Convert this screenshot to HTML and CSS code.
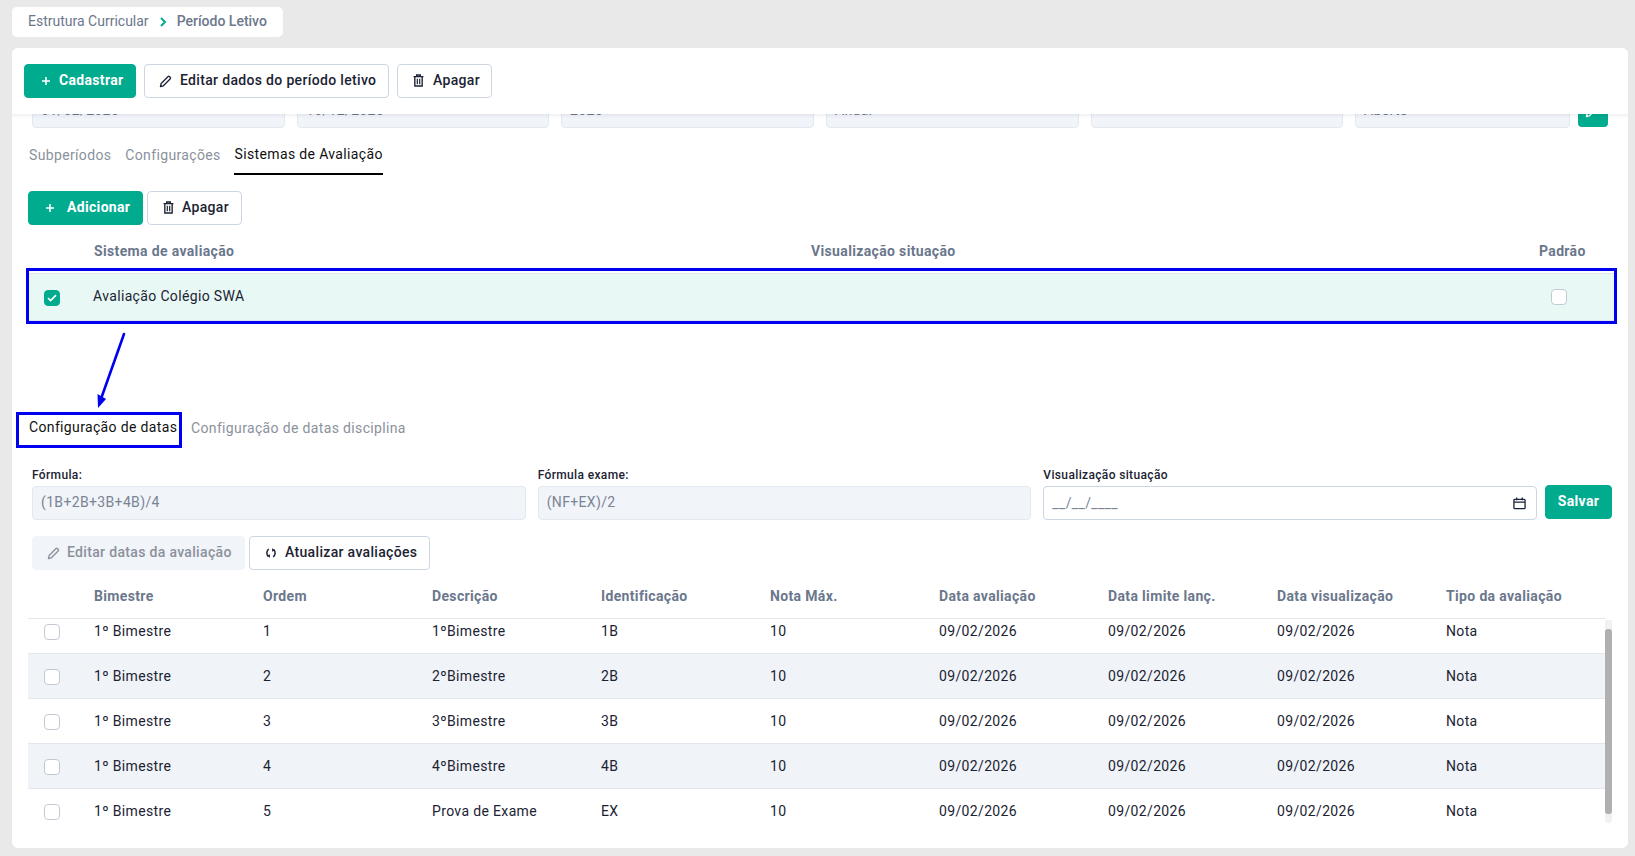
FILE: index.html
```html
<!DOCTYPE html>
<html lang="pt-BR">
<head>
<meta charset="utf-8">
<title>Período Letivo</title>
<link rel="stylesheet" href="styles.css">
</head>
<body>
<svg class="defs" width="0" height="0" aria-hidden="true">
  <symbol id="i-plus" viewBox="0 0 10 10"><path d="M5 1v8M1 5h8" fill="none" stroke="currentColor" stroke-width="1.6"/></symbol>
  <symbol id="i-pencil" viewBox="0 0 14 14"><path d="M1.500 12.500l.8-3.300 7.500-7.500a1 1 0 0 1 1.400 0l1 1a1 1 0 0 1 0 1.400l-7.500 7.500z" fill="none" stroke="currentColor" stroke-width="1.400" stroke-linejoin="round"/><path d="M1.500 12.500l.5-2 1.500 1.500z" fill="currentColor"/></symbol>
  <symbol id="i-trash" viewBox="0 0 12 14"><path d="M.6 2.800h10.800M4 2.800V1h4v1.800M2 2.800v10.200h8V2.800" fill="none" stroke="currentColor" stroke-width="1.500"/><path d="M4.700 5v6M7.300 5v6" stroke="currentColor" stroke-width="1.300"/></symbol>
  <symbol id="i-sync" viewBox="0 0 12 12"><path d="M3.900 2.200C1.500 3.500 1.100 7.500 3.300 9.500M8.100 9.800C10.500 8.500 10.900 4.500 8.700 2.500" fill="none" stroke="currentColor" stroke-width="1.500"/><path d="M1.900 8.800 5 10.800 4.800 7.300zM10.100 3.200 7 1.200 7.200 4.700z" fill="currentColor"/></symbol>
</svg>

<main class="page">
  <nav class="crumbs">
    <span>Estrutura Curricular</span>
    <svg class="crumb-sep" width="7" height="10" viewBox="0 0 7 10"><path d="M1 1l4 4-4 4" fill="none" stroke="currentColor" stroke-width="2"/></svg>
    <span class="crumb-now">Período Letivo</span>
  </nav>

  <section class="card">
    <header class="toolbar">
      <button class="btn btn-primary btn-cad"><svg class="ico-plus"><use href="#i-plus"/></svg>Cadastrar</button>
      <button class="btn btn-edit"><svg class="ico-pencil"><use href="#i-pencil"/></svg>Editar dados do período letivo</button>
      <button class="btn btn-del"><svg class="ico-trash"><use href="#i-trash"/></svg>Apagar</button>
    </header>

    <div class="peek">
      <div class="peek-field w253">01/02/2026</div>
      <div class="peek-field w252">10/12/2026</div>
      <div class="peek-field w253">2026</div>
      <div class="peek-field w253">Anual</div>
      <div class="peek-field w252"></div>
      <div class="peek-field w215">Aberto</div>
      <div class="peek-btn"><svg class="ico-pencil"><use href="#i-pencil"/></svg></div>
    </div>

    <div class="tabs">
      <span class="tab">Subperíodos</span>
      <span class="tab">Configurações</span>
      <span class="tab tab-on">Sistemas de Avaliação</span>
    </div>

    <div class="actions">
      <button class="btn btn-primary btn-add"><svg class="ico-plus"><use href="#i-plus"/></svg>Adicionar</button>
      <button class="btn btn-del2"><svg class="ico-trash"><use href="#i-trash"/></svg>Apagar</button>
    </div>

    <div class="sys-head">
      <span class="sys-name">Sistema de avaliação</span>
      <span class="sys-view">Visualização situação</span>
      <span>Padrão</span>
    </div>
    <div class="sys-row">
      <span class="check check-on"><svg width="10" height="8" viewBox="0 0 10 8"><path d="M1 4l2.600 2.600L9 1.200" fill="none" stroke="#fff" stroke-width="1.700"/></svg></span>
      <span class="sys-label">Avaliação Colégio SWA</span>
      <span class="check check-pad"></span>
    </div>

    <svg class="arrow" width="50" height="88" viewBox="0 0 50 88">
      <path d="M42 10 20 72" fill="none" stroke="#0000f0" stroke-width="2.600" stroke-linecap="round"/>
      <path d="M16 84 15.500 70 24 75z" fill="#0000f0"/>
    </svg>

    <div class="subtabs">
      <span class="subtab-box">Configuração de datas</span>
      <span class="subtab">Configuração de datas disciplina</span>
    </div>

    <div class="form">
      <label class="field"><span class="label">Fórmula:</span><span class="input input-off">(1B+2B+3B+4B)/4</span></label>
      <label class="field"><span class="label">Fórmula exame:</span><span class="input input-off">(NF+EX)/2</span></label>
      <label class="field"><span class="label">Visualização situação</span>
        <span class="input input-date">__/__/____
          <svg width="13" height="14" viewBox="0 0 14 14"><path d="M2 3h10a1 1 0 0 1 1 1v8a1 1 0 0 1-1 1H2a1 1 0 0 1-1-1V4a1 1 0 0 1 1-1zM1 6h12M4 1v3M10 1v3" fill="none" stroke="#17233a" stroke-width="1.400"/></svg>
        </span>
      </label>
      <button class="btn btn-primary btn-save">Salvar</button>
    </div>

    <div class="actions2">
      <button class="btn btn-off"><svg class="ico-pencil"><use href="#i-pencil"/></svg>Editar datas da avaliação</button>
      <button class="btn btn-sync"><svg class="ico-sync"><use href="#i-sync"/></svg>Atualizar avaliações</button>
    </div>

    <div class="grid-head row-cols">
      <span></span><span>Bimestre</span><span>Ordem</span><span>Descrição</span><span>Identificação</span><span>Nota Máx.</span><span>Data avaliação</span><span>Data limite lanç.</span><span>Data visualização</span><span>Tipo da avaliação</span>
    </div>
    <div class="grid-wrap">
      <div class="viewport">
        <div class="rows">
          <div class="row row-cols"><span class="check"></span><span>1º Bimestre</span><span>1</span><span>1ºBimestre</span><span>1B</span><span>10</span><span>09/02/2026</span><span>09/02/2026</span><span>09/02/2026</span><span>Nota</span></div>
          <div class="row row-cols"><span class="check"></span><span>1º Bimestre</span><span>2</span><span>2ºBimestre</span><span>2B</span><span>10</span><span>09/02/2026</span><span>09/02/2026</span><span>09/02/2026</span><span>Nota</span></div>
          <div class="row row-cols"><span class="check"></span><span>1º Bimestre</span><span>3</span><span>3ºBimestre</span><span>3B</span><span>10</span><span>09/02/2026</span><span>09/02/2026</span><span>09/02/2026</span><span>Nota</span></div>
          <div class="row row-cols"><span class="check"></span><span>1º Bimestre</span><span>4</span><span>4ºBimestre</span><span>4B</span><span>10</span><span>09/02/2026</span><span>09/02/2026</span><span>09/02/2026</span><span>Nota</span></div>
          <div class="row row-cols"><span class="check"></span><span>1º Bimestre</span><span>5</span><span>Prova de Exame</span><span>EX</span><span>10</span><span>09/02/2026</span><span>09/02/2026</span><span>09/02/2026</span><span>Nota</span></div>
        </div>
      </div>
      <div class="track"><div class="thumb"></div></div>
    </div>
  </section>
</main>
</body>
</html>
```
FILE: styles.css
```css
* { box-sizing: border-box; }
html, body { margin: 0; height: 100%; }
body {
  background: #e9e9e9;
  color: #1b2333;
  font: 14px/20px Roboto, "Liberation Sans", sans-serif;
  letter-spacing: .35px;
  overflow: hidden;
}
.defs { position: absolute; }
.page { padding: 7px 7px 8px 12px; }

.crumbs {
  display: flex; align-items: center;
  width: 271px; height: 30px;
  padding: 0 16px 2px;
  background: #fff; border-radius: 5px;
  color: #6b778c; letter-spacing: 0;
  white-space: nowrap;
}
.crumb-sep { flex: none; margin: 2px 10px 0 11px; color: #00ab8e; }
.crumb-now { font-weight: 500; }

.card {
  margin-top: 11px;
  height: 800px;
  background: #fff;
  border-radius: 6px;
  overflow: hidden;
}

.toolbar {
  position: relative; z-index: 1;
  display: flex; gap: 8px;
  height: 66px;
  padding: 16px 12px;
  background: #fff;
  box-shadow: 0 1px 4px rgba(30, 40, 60, .1);
}

.btn {
  display: inline-flex; align-items: center;
  height: 34px;
  padding: 0 0 2px;
  border: 1px solid #cdd6e2;
  border-radius: 4px;
  background: #fff;
  color: #1b2333;
  font: 500 14px/20px Roboto, "Liberation Sans", sans-serif;
  letter-spacing: .33px;
}
.btn svg { margin-top: 2px; }
.btn .ico-trash { margin-top: 1px; }
.btn-primary { background: #00ab8e; border-color: #00ab8e; color: #fff; font-weight: 700; }
.btn-cad { width: 112px; padding-left: 16px; }
.btn-cad .ico-plus { margin-right: 8px; }
.btn-edit { width: 245px; padding-left: 14px; }
.btn-edit .ico-pencil { margin-right: 8px; }
.btn-del { width: 95px; padding-left: 15px; }
.btn-del .ico-trash { margin-right: 9px; }
.btn-add { width: 115px; padding-left: 16px; }
.btn-add .ico-plus { margin-right: 12px; }
.btn-del2 { width: 95px; padding-left: 15px; }
.btn-del2 .ico-trash { margin-right: 8px; }
.ico-plus { width: 10px; height: 10px; }
.ico-pencil { width: 13px; height: 13px; }
.ico-trash { width: 11px; height: 13px; }
.ico-sync { width: 12px; height: 12px; margin-right: 8px; }

.peek {
  display: flex; align-items: flex-end; gap: 12px;
  height: 14px;
  padding: 0 20px;
  overflow: hidden;
}
.peek-field {
  flex: none;
  height: 34px;
  padding: 5px 8px;
  background: #f1f4f9;
  border: 1px solid #e3e8f0;
  border-radius: 4px;
  color: #6b778c;
}
.w253 { width: 253px; }
.w252 { width: 252px; }
.w215 { width: 215px; }
.peek-btn {
  flex: none; width: 30px; height: 34px;
  margin: 0 0 1px -4px;
  padding: 10px 0 0 7px;
  background: #00ab8e; border-radius: 4px;
  color: #fff;
}

.tabs {
  display: flex;
  height: 47px;
  padding: 12px 0 0 17px;
}
.tab { margin-right: 14px; color: #8b919c; padding-top: 5px; }
.tab-on {
  height: 35px;
  margin-left: -1px;
  padding: 4px 0 0 1px;
  width: 149px;
  color: #111;
  white-space: nowrap;
  border-bottom: 2.5px solid #000;
}

.actions { display: flex; gap: 4px; margin: 16px 0 0 16px; }

.sys-head {
  display: flex;
  height: 43px;
  padding: 16px 0 0 82px;
  color: #6b778c;
  font-weight: 700;
}
.sys-name { width: 717px; }
.sys-view { width: 728px; }

.sys-row {
  display: flex; align-items: center;
  width: 1591px; height: 56px;
  margin-left: 14px;
  padding: 0 47px 0 15px;
  border: 3px solid #0000f0;
  background: #e8f8f5;
  box-shadow: inset 0 2px 0 #fff, inset 0 3px 0 #e2e8f0, inset 0 -1px 0 #dfe5ec;
}
.sys-label { flex: 1; margin-left: 33px; }

.check {
  display: block; flex: none;
  width: 16px; height: 16px;
  margin-left: 16px;
  border: 1px solid #c3c9d2;
  border-radius: 4px;
  background: #fff;
}
.check-on {
  display: flex; align-items: center; justify-content: center;
  margin-left: 0; margin-top: 3px;
  background: #00ab8e; border-color: #00ab8e;
}
.check-pad { margin: 1px 0 0; }
.row .check { margin-top: 1px; }

.arrow { display: block; margin-left: 70px; }

.subtabs {
  display: flex; align-items: center;
  height: 36px;
  margin-left: 4px;
}
.subtab-box {
  height: 36px;
  width: 166px;
  padding: 2px 0 0 10px;
  border: 3px solid #0000f0;
  color: #111;
  white-space: nowrap;
}
.subtab { margin: -4px 0 0 9px; color: #8b919c; }

.form {
  display: flex; align-items: flex-end; gap: 12px;
  margin: 20px 16px 0 20px;
}
.field { flex: 1; display: block; }
.label {
  display: block;
  margin-bottom: 4px;
  font-size: 12px; line-height: 14px; font-weight: 500;
  letter-spacing: .35px;
  color: #1b2333;
}
.input {
  display: flex; align-items: center;
  height: 34px;
  padding: 0 8px 2px;
  border-radius: 4px;
  color: #7a8494;
}
.input-off { background: #f1f4f9; border: 1px solid #e3e8f0; }
.input-date { justify-content: space-between; padding: 0 10px 0 8px; border: 1px solid #cdd6e2; background: #fff; }
.btn-save { width: 67px; justify-content: center; margin: 0 0 1px -4px; }

.actions2 { display: flex; gap: 4px; margin: 16px 0 0 20px; }
.btn-off { width: 213px; padding-left: 14px; background: #f1f4f9; border-color: #f1f4f9; color: #8b919c; }
.btn-off .ico-pencil { margin-right: 7px; }
.btn-sync { width: 181px; padding-left: 15px; }

.row-cols {
  display: grid;
  grid-template-columns: 66px repeat(8, 169px) 1fr;
  align-items: center;
}
.grid-head {
  height: 49px;
  width: 1577px;
  margin-left: 16px;
  padding-top: 3px;
  border-bottom: 1px solid #e3e7ed;
  color: #6b778c;
  font-weight: 700;
}
.grid-wrap { display: flex; margin-left: 16px; height: 204px; }
.viewport { flex: none; width: 1577px; height: 204px; overflow: hidden; }
.rows { margin-top: -10px; }
.row { height: 45px; border-bottom: 1px solid #e3e7ed; }
.row:nth-child(even) { background: #f0f3f8; }
.track { width: 7px; margin-top: 1px; background: #f1f1f1; border-radius: 0 0 3px 3px; }
.thumb { height: 185px; margin-top: 9px; background: #b0b0b0; border-radius: 3px; }
```
